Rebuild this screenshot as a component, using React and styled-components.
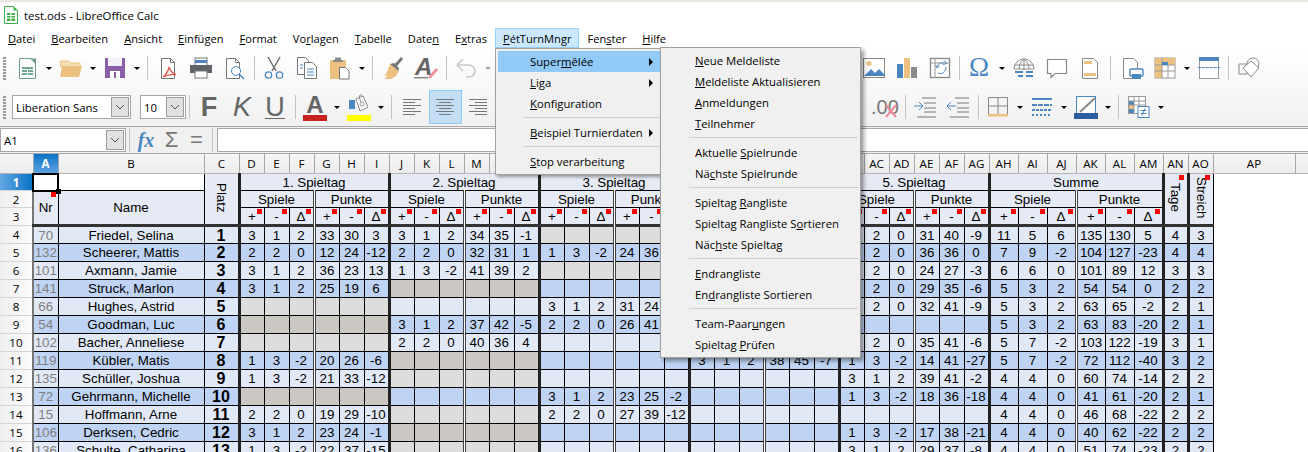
import React from "react";
import styled, { createGlobalStyle } from "styled-components";

const UI_FONT = `"Open Sans", "Noto Sans", sans-serif`;
const CELL_FONT = `"Liberation Sans", Arial, sans-serif`;

const GlobalStyle = createGlobalStyle`
  html, body { margin: 0; padding: 0; background: #fff; }
  #root { width: 1308px; height: 452px; }
`;

const Page = styled.div`
  position: relative;
  width: 1308px;
  height: 452px;
  overflow: hidden;
  background: #fff;
  font-family: ${UI_FONT};
  font-size: 11.3px;
  color: #000;
`;

const TitleBar = styled.div`
  height: 26px;
  border-top: 2px solid #e9e6e0;
  display: flex;
  align-items: center;
  gap: 6px;
  padding-left: 4px;
  font-size: 11.4px;
`;

const MenuBar = styled.div`
  height: 20px;
  display: flex;
`;

const MenuItem = styled.div`
  position: relative;
  box-sizing: border-box;
  height: 20px;
  padding: 0 7px;
  line-height: 19px;
  font-size: 11.1px;
  white-space: nowrap;
  border: 1px solid ${(p) => (p.$open ? "#99d1ff" : "transparent")};
  background: ${(p) => (p.$open ? "#cce8ff" : "transparent")};
`;

const Dropdown = styled.div`
  position: absolute;
  z-index: 5;
  left: -1px;
  top: 19px;
  width: 166px;
  box-sizing: border-box;
  padding: 2px 0 2px 2px;
  border: 1px solid #a0a0a0;
  background: #f0f0f0;
  font-size: 11.3px;
  box-shadow: 2px 2px 3px rgba(0, 0, 0, 0.35);
`;

const SubMenu = styled(Dropdown)`
  z-index: 6;
  left: 164px;
  top: -2px;
  width: 201px;
  padding: 2px;
  box-shadow: 3px 3px 4px rgba(0, 0, 0, 0.4);
`;

const DropItem = styled.div`
  position: relative;
  height: 21px;
  line-height: 22px;
  padding-left: 32px;
  background: ${(p) => (p.$active ? "#91c9f7" : "transparent")};
`;

const Arrow = styled.span`
  position: absolute;
  right: 7px;
  top: 7px;
  width: 0;
  height: 0;
  border-left: 4px solid #000;
  border-top: 4px solid transparent;
  border-bottom: 4px solid transparent;
`;

const DropRule = styled.div`
  height: 1px;
  margin: 3px 0 4px 25px;
  background: #d0d0d0;
`;

const SubRule = styled(DropRule)`
  margin: 3px 0 4px 26px;
`;

const Toolbars = styled.div`
  height: 78px;
  background: linear-gradient(#ffffff, #f1f1f1);
  border-bottom: 1px solid #a9a9a9;
`;

const ToolRow = styled.div`
  height: ${(p) => p.$h}px;
  display: flex;
  align-items: center;
  justify-content: space-between;
  padding-right: ${(p) => p.$pr}px;
`;

const ToolGroup = styled.div`
  display: flex;
  align-items: center;
`;

const Grip = styled.div`
  width: 3px;
  height: 23px;
  margin: 0 ${(p) => p.$after}px 0 3px;
  background: repeating-linear-gradient(#9a9a9a 0 2px, transparent 2px 3px);
`;

const Btn = styled.div`
  box-sizing: border-box;
  width: 33px;
  height: ${(p) => (p.$on ? "34px" : "24px")};
  display: flex;
  align-items: center;
  justify-content: center;
  flex: none;
  background: ${(p) => (p.$on ? "#c4def5" : "transparent")};
  border: ${(p) => (p.$on ? "1px solid #90c8f6" : "none")};
`;

const Caret = styled.div`
  width: 11px;
  height: 24px;
  flex: none;
  display: flex;
  align-items: center;
  justify-content: center;
  &::after {
    content: "";
    border-top: 3px solid ${(p) => (p.$off ? "#a8a8a8" : "#000")};
    border-left: 3px solid transparent;
    border-right: 3px solid transparent;
  }
`;

const Sep = styled.div`
  width: ${(p) => p.$w || 7}px;
  height: 24px;
  flex: none;
  display: flex;
  justify-content: center;
  &::after {
    content: "";
    width: 1px;
    background: #c4c4c4;
  }
`;

const Combo = styled.div`
  box-sizing: border-box;
  width: ${(p) => p.$w}px;
  height: 24px;
  margin-right: ${(p) => p.$mr || 0}px;
  flex: none;
  display: flex;
  align-items: center;
  justify-content: space-between;
  padding: 1px 1px 1px 3px;
  background: #fff;
  border: 1px solid #a6a6a6;
  font-size: 11.4px;
`;

const ComboBtn = styled.div`
  box-sizing: border-box;
  width: 18px;
  height: 20px;
  background: #e1e1e1;
  border: 1px solid #9c9c9c;
  display: flex;
  align-items: center;
  justify-content: center;
`;

const Letter = styled.span`
  font-family: ${CELL_FONT};
  font-size: 27px;
  line-height: 22px;
  color: #666;
  font-weight: ${(p) => (p.$bold ? 700 : 400)};
  font-style: ${(p) => (p.$italic ? "italic" : "normal")};
  border-bottom: ${(p) => (p.$under ? "1.5px solid #666" : "none")};
`;

const FormulaBar = styled.div`
  height: 27px;
  box-sizing: border-box;
  display: flex;
  align-items: center;
  background: #f0f0f0;
  border-bottom: 1px solid #a9a9a9;
`;

const NameBox = styled(Combo)`
  margin-right: 0;
`;

const FxGlyph = styled.span`
  width: 26px;
  text-align: center;
  flex: none;
  font-family: "Liberation Serif", serif;
  font-weight: 700;
  font-style: italic;
  font-size: 20px;
  line-height: 22px;
  color: #4a86c0;
`;

const MathGlyph = styled.span`
  width: 25px;
  text-align: center;
  flex: none;
  font-family: ${CELL_FONT};
  font-size: 22px;
  line-height: 22px;
  color: #777;
`;

const FormulaInput = styled.div`
  flex: 1;
  height: 24px;
  margin-left: 1px;
  box-sizing: border-box;
  background: #fff;
  border: 1px solid #a6a6a6;
  border-right: none;
`;

const Sheet = styled.table`
  table-layout: fixed;
  width: 1308px;
  border-collapse: collapse;
  font-family: ${CELL_FONT};
  font-size: 13.33px;
  line-height: 15px;
`;

const Row = styled.tr`
  height: ${(p) => p.$h}px;
`;

const ColHead = styled.th`
  padding: 1px 0 0;
  font-family: ${UI_FONT};
  font-size: 11.6px;
  font-weight: ${(p) => (p.$sel ? 700 : 400)};
  color: ${(p) => (p.$sel ? "#fff" : "#000")};
  background: ${(p) =>
    p.$sel ? "linear-gradient(#0a72c6, #5ba3e0)" : "linear-gradient(#f6f6f6, #ececec)"};
  border-right: 1px solid #a8a8a8;
  border-bottom: 1px solid #b4b4b4;
`;

const RowHead = styled.th`
  padding: 1px 0 0;
  font-family: ${UI_FONT};
  font-size: 11.6px;
  font-weight: ${(p) => (p.$sel ? 700 : 400)};
  color: ${(p) => (p.$sel ? "#fff" : "#000")};
  background: ${(p) =>
    p.$sel ? "linear-gradient(to right, #62a8e2, #0a72c6)" : "linear-gradient(to right, #efefef, #fbfbfb)"};
  border-bottom: 1px solid #d4d4d4;
`;

const leftBorder = {
  thick: "3px solid #222",
  double: "3px double #444",
  grey: "2px solid #777",
  thin: "1px solid #000",
};

const Cell = styled.td`
  position: relative;
  padding: 1px 0 0;
  text-align: center;
  white-space: nowrap;
  color: ${(p) => (p.$muted ? "#7f7f7f" : "#000")};
  font-weight: ${(p) => (p.$strong ? 700 : 400)};
  font-size: ${(p) => (p.$strong ? "16px" : "13.33px")};
  background: ${(p) => p.$bg};
  border: 1px solid #000;
  border-left: ${(p) => leftBorder[p.$left || "thin"]};
  border-bottom: ${(p) => (p.$endHead ? "3px solid #333" : "1px solid #000")};
`;

const Blank = styled.td`
  padding: 0;
  background: #fff;
`;

const Rotated = styled.span`
  display: inline-block;
  writing-mode: vertical-rl;
  line-height: 15px;
`;

const Mark = styled.span`
  position: absolute;
  right: ${(p) => p.$r || 1}px;
  top: 1px;
  width: 5px;
  height: 5px;
  background: #ff0000;
`;

const Selection = styled.span`
  position: absolute;
  z-index: 2;
  left: -2px;
  top: -1px;
  right: -1px;
  bottom: -2px;
  border: 2px solid #000;
  &::after {
    content: "";
    position: absolute;
    right: -4px;
    bottom: -4px;
    width: 5px;
    height: 5px;
    background: #000;
  }
`;

const AccentBar = styled.div`
  position: absolute;
  left: 0;
  right: 0;
  bottom: 0;
  height: 6px;
  background: ${(p) => p.$c};
`;

const ColourTool = styled.div`
  position: relative;
  width: 24px;
  height: 28px;
  text-align: center;
  font-family: ${CELL_FONT};
  font-size: 24px;
  line-height: 24px;
  font-weight: 700;
  color: #666;
`;

const Svg = ({ children, w = 24, h = 24 }) => (
  <svg width={w} height={h} viewBox={`0 0 ${w} ${h}`} fill="none">
    {children}
  </svg>
);

const BLUE = "#4a86c0";
const TAN = "#ecc17f";

const Chevron = () => (
  <svg width="10" height="6" viewBox="0 0 10 6" fill="none">
    <path d="M1 1l4 4 4-4" stroke="#555" />
  </svg>
);

const DocIcon = () => (
  <svg width="14" height="18" viewBox="0 0 14 18" fill="none">
    <path d="M.5.5h9l4 4v13H.5z" fill="#fff" stroke="#3fae49" />
    <path d="M9.5.5l4 4h-4z" fill="#3fae49" />
    <rect x="3" y="7" width="8" height="8" fill="#3fae49" />
    <path d="M3 9.5h8M3 12h8M7 7v8" stroke="#fff" />
  </svg>
);

const NewIcon = () => (
  <Svg>
    <path d="M4.5 2.5h12l4 4v16h-16z" fill="#fff" stroke="#6f9f8f" />
    <path d="M15 2.5l6 6v-6z" fill="#6f9f8f" />
    <rect x="7" y="11" width="11" height="8" fill="#6fa98f" />
    <path d="M7 13.5h11M7 16.5h11M12.5 13v6" stroke="#fff" />
  </Svg>
);
const OpenIcon = () => (
  <Svg>
    <path d="M1.5 5h8l2 2h9.5v4H1.5z" fill="#f5deb3" stroke={TAN} />
    <path d="M3 10h20l-3 11H1z" fill={TAN} />
  </Svg>
);
const SaveIcon = () => (
  <Svg>
    <path d="M2 2h20v20H2z" fill="#8b5ea8" />
    <rect x="5" y="2" width="14" height="8" fill="#f4f0f7" />
    <rect x="7" y="15" width="10" height="7" fill="#fff" />
    <rect x="11" y="16" width="2" height="6" fill="#8b5ea8" />
  </Svg>
);
const PdfIcon = () => (
  <Svg>
    <path d="M5.5 2.5h9l4 4v16h-13z" fill="#fff" stroke="#777" />
    <path d="M14.5 2.5v4h4" stroke="#777" />
    <path d="M13 11c-1 5-3 8-6 10 4-2 8-3 13-2.5-3-1-6-4-7-7.5z" stroke="#e2584b" strokeWidth="1.3" fill="#fff" />
  </Svg>
);
const PrintIcon = () => (
  <Svg>
    <rect x="6" y="2" width="12" height="8" fill="#fff" stroke="#777" />
    <rect x="6" y="4" width="12" height="3" fill="#4a86c0" />
    <path d="M1 9h22v8h-5v-2H6v2H1z" fill="#606468" />
    <rect x="6" y="15" width="12" height="7" fill="#fff" stroke="#777" />
  </Svg>
);
const PreviewIcon = () => (
  <Svg>
    <path d="M4.5 2.5h9l4 4v16h-13z" fill="#fff" stroke="#777" />
    <path d="M13.5 2.5v4h4" stroke="#777" />
    <circle cx="14" cy="15" r="4.5" fill="#fff" stroke={BLUE} />
    <path d="M17 18l5 5" stroke={BLUE} strokeWidth="1.5" />
  </Svg>
);
const CutIcon = () => (
  <Svg>
    <path d="M6 1l8 14M18 1l-8 14" stroke="#6e6e6e" strokeWidth="1.5" />
    <circle cx="6.5" cy="19" r="3.2" stroke={BLUE} strokeWidth="1.3" />
    <circle cx="17.5" cy="19" r="3.2" stroke={BLUE} strokeWidth="1.3" />
  </Svg>
);
const CopyIcon = () => (
  <Svg>
    <path d="M2.5 1.5h8l3 3v14h-11z" fill="#fff" stroke="#777" />
    <path d="M9.5 6.5h8l4 4v12h-12z" fill="#fff" stroke="#777" />
    <path d="M12 13h7M12 16h7M12 19h7M5 9h3M5 12h3" stroke={BLUE} />
  </Svg>
);
const PasteIcon = () => (
  <Svg>
    <rect x="2" y="4" width="16" height="19" fill={TAN} />
    <path d="M7 4V1.5h6V4h2v2H5V4z" fill="#8a8a8a" />
    <path d="M11.5 11.5h6l3.5 3.5v8h-9.5z" fill="#fff" stroke="#777" />
  </Svg>
);
const CloneIcon = () => (
  <Svg>
    <path d="M14 10L21 2" stroke="#777" strokeWidth="3" />
    <path d="M9 8l9 7-3 5-5 3H3c2-1 3-3 3-4l-3 1 3-4z" fill={TAN} />
    <path d="M9 8l4-1 5 5-.5 3z" fill="#777" />
  </Svg>
);
const ClearIcon = () => (
  <Svg>
    <text x="1" y="19" fontFamily={CELL_FONT} fontSize="24" fontWeight="700" fontStyle="italic" fill="#666">
      A
    </text>
    <path d="M15 20l7-8 2 2-7 8h-3z" fill="#ee8d9c" />
    <rect x="0" y="21" width="14" height="1.5" fill="#888" />
  </Svg>
);
const UndoIcon = () => (
  <Svg>
    <path d="M3 9h12a6 6 0 010 12h-3M3 9l6-6M3 9l6 6" stroke="#c8c8c8" strokeWidth="1.6" />
  </Svg>
);
const ImageIcon = () => (
  <Svg>
    <rect x="1.5" y="2.5" width="21" height="19" fill="#fff" stroke="#888" />
    <circle cx="7" cy="7.5" r="2.5" fill={TAN} />
    <path d="M2 20l7-7 4 4 4-4 5 5v2z" fill={BLUE} />
  </Svg>
);
const ChartIcon = () => (
  <Svg>
    <rect x="2" y="8" width="6" height="14" fill={BLUE} />
    <rect x="9" y="2" width="6" height="20" fill={TAN} />
    <rect x="16" y="11" width="6" height="11" fill="#8a8a8a" />
  </Svg>
);
const PivotIcon = () => (
  <Svg>
    <rect x="2.5" y="2.5" width="19" height="19" fill="#fff" stroke="#888" strokeWidth="1.3" />
    <path d="M2 7h20M7 2v20" stroke="#999" />
    <path d="M10 17c4 2 8-1 8-6M16 7c-3-1-6 1-7 4M16 4.5l2.5 3-3.5 1M7.5 9l1.5 3 2.5-2" stroke={BLUE} />
  </Svg>
);
const OmegaIcon = () => (
  <svg width="26" height="24" viewBox="0 0 26 24" fill="none">
    <text x="2" y="20" fontFamily="Liberation Serif, serif" fontSize="27" fill={BLUE}>
      Ω
    </text>
  </svg>
);
const GlobeIcon = () => (
  <Svg>
    <path d="M2 13a9 9 0 0120 0" stroke="#8a8a8a" />
    <path d="M12 3v11M7 13c0-4 2-8 5-10 3 2 5 6 5 10M3 9h18M2 13h20" stroke="#8a8a8a" />
    <path d="M3 16h8M14 16h7M6 20h5M14 20h7" stroke={BLUE} strokeWidth="2" />
  </Svg>
);
const CommentIcon = () => (
  <Svg>
    <path d="M2.5 3.5h19v14H10l-4 4v-4H2.5z" fill="#fff" stroke="#888" strokeWidth="1.2" />
  </Svg>
);
const HeaderIcon = () => (
  <Svg>
    <path d="M4.5 2.5h11l4 4v16h-15z" fill="#fff" stroke="#888" />
    <rect x="6" y="5" width="8" height="3" fill={TAN} />
    <rect x="6" y="17" width="12" height="3" fill={TAN} />
  </Svg>
);
const PrintAreaIcon = () => (
  <Svg>
    <path d="M3.5 2.5h10l4 4v16h-14z" fill="#fff" stroke="#888" />
    <rect x="10" y="13" width="13" height="7" rx="1" fill="#fff" stroke={BLUE} strokeWidth="1.4" />
    <rect x="12" y="18" width="9" height="5" fill={BLUE} />
  </Svg>
);
const DefineIcon = () => (
  <Svg>
    <rect x="2" y="2" width="20" height="20" fill="#fff" stroke="#999" />
    <rect x="2" y="2" width="20" height="7" fill={TAN} />
    <rect x="2" y="2" width="7" height="20" fill={TAN} />
    <path d="M9 9h13M9 15h13M15 9v13M2 9h7M2 15h7M9 2v20" stroke="#999" />
    <rect x="9" y="6" width="6" height="3" fill={BLUE} />
  </Svg>
);
const SplitIcon = () => (
  <Svg>
    <rect x="2.5" y="1.5" width="19" height="21" fill="#fff" stroke="#999" />
    <rect x="2" y="1" width="20" height="4" fill={BLUE} />
    <path d="M1 11.5h22" stroke={BLUE} strokeDasharray="3 1" />
  </Svg>
);
const ShapesIcon = () => (
  <Svg>
    <path d="M2 8h8v10H2z" stroke="#888" />
    <circle cx="16" cy="8" r="6" fill="#fff" stroke="#888" />
    <path d="M14 5l8 7-8 9-8-9z" fill="#fff" stroke="#888" />
  </Svg>
);
const BucketIcon = () => (
  <Svg h={20}>
    <path d="M9 6l7-3 5 11-8 4z" fill="#fff" stroke="#888" />
    <path d="M15 3c-2-3-4 0-1 6" stroke="#888" />
    <rect x="2" y="7" width="6" height="9" fill={BLUE} />
    <circle cx="15" cy="11" r="2" stroke="#999" />
  </Svg>
);
const AlignIcon = ({ mode }) => {
  const rows = [18, 12, 18, 12, 18, 12];
  return (
    <Svg w={20} h={20}>
      {rows.map((w, i) => {
        const x = mode === "left" ? 1 : mode === "right" ? 19 - w : 10 - w / 2;
        return <rect key={i} x={x} y={2 + i * 3} width={w} height="1" fill="#777" />;
      })}
    </Svg>
  );
};
const DelDecIcon = () => (
  <svg width="28" height="24" viewBox="0 0 28 24" fill="none">
    <text x="0" y="19" fontFamily={CELL_FONT} fontSize="20" fill="#777">
      .00
    </text>
    <path d="M15 10l10 12M25 10L15 22" stroke="#ea8c98" strokeWidth="2" />
  </svg>
);
const IndentIcon = ({ out }) => (
  <Svg>
    <path d="M9 3h14M11 8h12M11 13h12M11 17h12M4 22h19" stroke="#777" />
    {out ? (
      <path d="M10 11H1M5 7l-4 4 4 4" stroke={BLUE} />
    ) : (
      <path d="M1 11h9M6 7l4 4-4 4" stroke={BLUE} />
    )}
  </Svg>
);
const BordersIcon = () => (
  <Svg>
    <path d="M2.5 2.5h19v17h-19zM12 2v17M2 11h20" stroke="#888" />
    <rect x="2" y="19" width="20" height="2.5" fill={TAN} />
  </Svg>
);
const LineStyleIcon = () => (
  <Svg>
    <path d="M2 4h20" stroke={BLUE} strokeWidth="2" />
    <path d="M2 10h20" stroke={BLUE} strokeWidth="2" strokeDasharray="5 1" />
    <path d="M2 15h20" stroke={BLUE} strokeWidth="2" strokeDasharray="3 1" />
    <path d="M2 20h20" stroke={BLUE} strokeWidth="2" strokeDasharray="2 2" />
  </Svg>
);
const LineColourIcon = () => (
  <Svg>
    <rect x="2.5" y="1.5" width="19" height="17" fill="#fff" stroke={BLUE} />
    <path d="M6 17L21 3" stroke="#888" strokeWidth="2" />
    <rect x="0" y="18" width="24" height="6" fill="#2d5f9e" />
  </Svg>
);
const CondIcon = () => (
  <Svg>
    <rect x="1.5" y="1.5" width="17" height="17" fill="#fff" stroke="#999" />
    <rect x="2" y="6" width="5" height="4" fill={BLUE} />
    <rect x="2" y="10" width="5" height="4" fill={TAN} />
    <rect x="2" y="14" width="5" height="4" fill={BLUE} />
    <path d="M7 2v16M12 2v10M2 6h16M2 10h16" stroke="#999" />
    <rect x="11" y="11.5" width="11" height="11" fill="#fff" stroke={BLUE} />
    <path d="M13.5 15.5h6M13.5 18.5h6M18 13.5l-3 7" stroke={BLUE} />
  </Svg>
);

const menus = [
  [<u key="u">D</u>, "atei"],
  [<u key="u">B</u>, "earbeiten"],
  [<u key="u">A</u>, "nsicht"],
  [<u key="u">E</u>, "infügen"],
  [<u key="u">F</u>, "ormat"],
  ["Vo", <u key="u">r</u>, "lagen"],
  [<u key="u">T</u>, "abelle"],
  ["Date", <u key="u">n</u>],
  ["E", <u key="u">x</u>, "tras"],
];

const subItems = [
  [<u key="u">N</u>, "eue Meldeliste"],
  [<u key="u">M</u>, "eldeliste Aktualisieren"],
  [<u key="u">A</u>, "nmeldungen"],
  [<u key="u">T</u>, "eilnehmer"],
  null,
  ["Aktuelle ", <u key="u">S</u>, "pielrunde"],
  ["Nä", <u key="u">c</u>, "hste Spielrunde"],
  null,
  ["Spieltag ", <u key="u">R</u>, "angliste"],
  ["Spieltag Rangliste S", <u key="u">o</u>, "rtieren"],
  ["Näc", <u key="u">h</u>, "ste Spieltag"],
  null,
  [<u key="u">E</u>, "ndrangliste"],
  ["En", <u key="u">d</u>, "rangliste Sortieren"],
  null,
  ["Team-Paar", <u key="u">u</u>, "ngen"],
  ["Spieltag ", <u key="u">P</u>, "rüfen"],
];

const G = "grey";
const E = null;
const players = [
  [70, "Friedel, Selina", [[3, 1, 2, 33, 30, 3], [3, 1, 2, 34, 35, -1], G, E, [2, 2, 0, 31, 40, -9]], [11, 5, 6, 135, 130, 5], 4, 3],
  [132, "Scheerer, Mattis", [[2, 2, 0, 12, 24, -12], [2, 2, 0, 32, 31, 1], [1, 3, -2, 24, 36, -12], E, [2, 2, 0, 36, 36, 0]], [7, 9, -2, 104, 127, -23], 4, 4],
  [101, "Axmann, Jamie", [[3, 1, 2, 36, 23, 13], [1, 3, -2, 41, 39, 2], G, E, [2, 2, 0, 24, 27, -3]], [6, 6, 0, 101, 89, 12], 3, 3],
  [141, "Struck, Marlon", [[3, 1, 2, 25, 19, 6], G, E, E, [2, 2, 0, 29, 35, -6]], [5, 3, 2, 54, 54, 0], 2, 2],
  [66, "Hughes, Astrid", [G, E, [3, 1, 2, 31, 24, 7], E, [2, 2, 0, 32, 41, -9]], [5, 3, 2, 63, 65, -2], 2, 1],
  [54, "Goodman, Luc", [G, [3, 1, 2, 37, 42, -5], [2, 2, 0, 26, 41, -15], E, E], [5, 3, 2, 63, 83, -20], 2, 1],
  [102, "Bacher, Anneliese", [G, [2, 2, 0, 40, 36, 4], E, E, [2, 2, 0, 35, 41, -6]], [5, 7, -2, 103, 122, -19], 3, 1],
  [119, "Kübler, Matis", [[1, 3, -2, 20, 26, -6], G, E, [3, 1, 2, 38, 45, -7], [1, 3, -2, 14, 41, -27]], [5, 7, -2, 72, 112, -40], 3, 2],
  [135, "Schüller, Joshua", [[1, 3, -2, 21, 33, -12], G, E, E, [3, 1, 2, 39, 41, -2]], [4, 4, 0, 60, 74, -14], 2, 2],
  [72, "Gehrmann, Michelle", [G, E, [3, 1, 2, 23, 25, -2], E, [1, 3, -2, 18, 36, -18]], [4, 4, 0, 41, 61, -20], 2, 1],
  [15, "Hoffmann, Arne", [[2, 2, 0, 19, 29, -10], G, [2, 2, 0, 27, 39, -12], E, E], [4, 4, 0, 46, 68, -22], 2, 2],
  [106, "Derksen, Cedric", [[3, 1, 2, 23, 24, -1], G, E, E, [1, 3, -2, 17, 38, -21]], [4, 4, 0, 40, 62, -22], 2, 2],
  [136, "Schulte, Catharina", [[1, 3, -2, 22, 37, -15], G, E, E, [3, 1, 2, 29, 37, -8]], [4, 4, 0, 51, 74, -23], 2, 2],
];

const colName = (i) => (i < 26 ? String.fromCharCode(65 + i) : "A" + String.fromCharCode(39 + i));
const colWidth = (i) => {
  if (i === 0) return 25;
  if (i === 1) return 146;
  if (i === 2) return 35;
  if (i >= 33 && i <= 38) return 29;
  if (i === 41) return 82;
  return 25;
};
const COLS = Array.from({ length: 42 }, (_, i) => i);
const HEAD = "#e6eaf4";
const tags = ["1. Spieltag", "2. Spieltag", "3. Spieltag", "4. Spieltag", "5. Spieltag", "Summe"];
const groupLeft = (i) => (i % 6 === 0 ? "thick" : i % 6 === 3 ? "double" : "thin");

const App = () => {
  const groupIds = [0, 1, 2, 3, 4, 5];
  return (
    <Page>
      <GlobalStyle />
      <TitleBar>
        <DocIcon />
        <span>test.ods - LibreOffice Calc</span>
      </TitleBar>
      <MenuBar>
        {menus.map((m, i) => (
          <MenuItem key={i}>{m}</MenuItem>
        ))}
        <MenuItem $open>
          <u>P</u>étTurnMngr
          <Dropdown>
            <DropItem $active>
              Super<u>m</u>êlée
              <Arrow />
            </DropItem>
            <DropItem>
              <u>L</u>iga
              <Arrow />
            </DropItem>
            <DropItem>
              <u>K</u>onfiguration
            </DropItem>
            <DropRule />
            <DropItem>
              <u>B</u>eispiel Turnierdaten
              <Arrow />
            </DropItem>
            <DropRule />
            <DropItem>
              <u>S</u>top verarbeitung
            </DropItem>
            <SubMenu>
              {subItems.map((s, i) => (s ? <DropItem key={i}>{s}</DropItem> : <SubRule key={i} />))}
            </SubMenu>
          </Dropdown>
        </MenuItem>
        <MenuItem>
          Fen<u>s</u>ter
        </MenuItem>
        <MenuItem>
          <u>H</u>ilfe
        </MenuItem>
      </MenuBar>
      <Toolbars>
        <ToolRow $h={40} $pr={43}>
          <ToolGroup>
            <Grip $after={4.5} />
            <Btn><NewIcon /></Btn>
            <Caret />
            <Btn><OpenIcon /></Btn>
            <Caret />
            <Btn><SaveIcon /></Btn>
            <Caret />
            <Sep $w={9} />
            <Btn><PdfIcon /></Btn>
            <Btn><PrintIcon /></Btn>
            <Btn><PreviewIcon /></Btn>
            <Sep />
            <Btn><CutIcon /></Btn>
            <Btn><CopyIcon /></Btn>
            <Btn><PasteIcon /></Btn>
            <Caret />
            <Sep $w={9} />
            <Btn><CloneIcon /></Btn>
            <Btn><ClearIcon /></Btn>
            <Sep />
            <Btn><UndoIcon /></Btn>
            <Caret $off />
          </ToolGroup>
          <ToolGroup>
            <Btn><ImageIcon /></Btn>
            <Btn><ChartIcon /></Btn>
            <Btn><PivotIcon /></Btn>
            <Sep />
            <Btn><OmegaIcon /></Btn>
            <Caret />
            <Btn><GlobeIcon /></Btn>
            <Btn><CommentIcon /></Btn>
            <Btn><HeaderIcon /></Btn>
            <Sep $w={9} />
            <Btn><PrintAreaIcon /></Btn>
            <Btn><DefineIcon /></Btn>
            <Caret />
            <Btn><SplitIcon /></Btn>
            <Sep />
            <Btn><ShapesIcon /></Btn>
          </ToolGroup>
        </ToolRow>
        <ToolRow $h={38} $pr={141.5}>
          <ToolGroup>
            <Grip $after={6} />
            <Combo $w={119} $mr={9}>
              Liberation Sans
              <ComboBtn><Chevron /></ComboBtn>
            </Combo>
            <Combo $w={45.5}>
              10
              <ComboBtn><Chevron /></ComboBtn>
            </Combo>
            <Sep />
            <Btn><Letter $bold>F</Letter></Btn>
            <Btn><Letter $italic>K</Letter></Btn>
            <Btn><Letter $under>U</Letter></Btn>
            <Sep />
            <Btn>
              <ColourTool>
                A
                <AccentBar $c="#c9211e" />
              </ColourTool>
            </Btn>
            <Caret />
            <Btn>
              <ColourTool>
                <BucketIcon />
                <AccentBar $c="#ffff00" />
              </ColourTool>
            </Btn>
            <Caret />
            <Sep $w={9} />
            <Btn><AlignIcon mode="left" /></Btn>
            <Btn $on><AlignIcon mode="center" /></Btn>
            <Btn><AlignIcon mode="right" /></Btn>
          </ToolGroup>
          <ToolGroup>
            <Btn />
            <Btn><DelDecIcon /></Btn>
            <Sep />
            <Btn><IndentIcon /></Btn>
            <Btn><IndentIcon out /></Btn>
            <Sep />
            <Btn><BordersIcon /></Btn>
            <Caret />
            <Btn><LineStyleIcon /></Btn>
            <Caret />
            <Btn><LineColourIcon /></Btn>
            <Caret />
            <Sep $w={9} />
            <Btn><CondIcon /></Btn>
            <Caret />
          </ToolGroup>
        </ToolRow>
      </Toolbars>
      <FormulaBar>
        <NameBox $w={126}>
          A1
          <ComboBtn><Chevron /></ComboBtn>
        </NameBox>
        <Sep />
        <FxGlyph>fx</FxGlyph>
        <MathGlyph>Σ</MathGlyph>
        <MathGlyph>=</MathGlyph>
        <Sep />
        <FormulaInput />
      </FormulaBar>
      <Sheet>
        <colgroup>
          <col width={33} />
          {COLS.map((i) => (
            <col key={i} width={colWidth(i)} />
          ))}
          <col width={13} />
        </colgroup>
        <thead>
          <Row $h={19}>
            <ColHead />
            {COLS.map((i) => (
              <ColHead key={i} $sel={i === 0}>
                {colName(i)}
              </ColHead>
            ))}
            <ColHead />
          </Row>
        </thead>
        <tbody>
          <Row $h={17}>
            <RowHead $sel>1</RowHead>
            <Cell $bg="#fff" $left="grey">
              <Selection />
            </Cell>
            <Cell $bg="#fff" />
            <Cell $bg={HEAD} rowSpan={3} $endHead>
              <Rotated>Platz</Rotated>
            </Cell>
            {groupIds.map((g) => (
              <Cell key={g} $bg={HEAD} colSpan={6} $left="thick">
                {tags[g]}
              </Cell>
            ))}
            <Cell $bg={HEAD} rowSpan={3} $left="thick" $endHead>
              <Mark $r={3} />
              <Rotated>Tage</Rotated>
            </Cell>
            <Cell $bg={HEAD} rowSpan={3} $left="thick" $endHead>
              <Mark $r={3} />
              <Rotated>Streich</Rotated>
            </Cell>
            <Blank colSpan={2} rowSpan={3} />
          </Row>
          <Row $h={17}>
            <RowHead>2</RowHead>
            <Cell $bg={HEAD} $left="grey" rowSpan={2} $endHead>
              <Mark $r={2} />
              Nr
            </Cell>
            <Cell $bg={HEAD} rowSpan={2} $endHead>
              Name
            </Cell>
            {groupIds.map((g) => (
              <React.Fragment key={g}>
                <Cell $bg={HEAD} colSpan={3} $left="thick">Spiele</Cell>
                <Cell $bg={HEAD} colSpan={3} $left="double">Punkte</Cell>
              </React.Fragment>
            ))}
          </Row>
          <Row $h={17}>
            <RowHead>3</RowHead>
            {groupIds.map((g) =>
              ["+", "-", "Δ", "+", "-", "Δ"].map((sym, i) => (
                <Cell key={g + "-" + i} $bg={HEAD} $left={groupLeft(i)} $endHead>
                  {sym}
                  <Mark $r={2} />
                </Cell>
              ))
            )}
          </Row>
          {players.map(([nr, name, rounds, sum, days, strikes], idx) => {
            const dark = idx % 2 === 1;
            const bg = dark ? "#bfd4f4" : "#e2e9f6";
            const grey = dark ? "#cbc7c2" : "#dddddd";
            return (
              <Row $h={18} key={nr}>
                <RowHead>{idx + 4}</RowHead>
                <Cell $bg={bg} $left="grey" $muted>{nr}</Cell>
                <Cell $bg={bg}>{name}</Cell>
                <Cell $bg={bg} $strong>{idx + 1}</Cell>
                {[...rounds, sum].map((round, g) =>
                  [0, 1, 2, 3, 4, 5].map((i) => (
                    <Cell key={g + "-" + i} $bg={round === G ? grey : bg} $left={groupLeft(i)}>
                      {Array.isArray(round) ? round[i] : ""}
                    </Cell>
                  ))
                )}
                <Cell $bg={bg} $left="thick">{days}</Cell>
                <Cell $bg={bg} $left="thick">{strikes}</Cell>
                <Blank colSpan={2} />
              </Row>
            );
          })}
        </tbody>
      </Sheet>
    </Page>
  );
};

export default App;
